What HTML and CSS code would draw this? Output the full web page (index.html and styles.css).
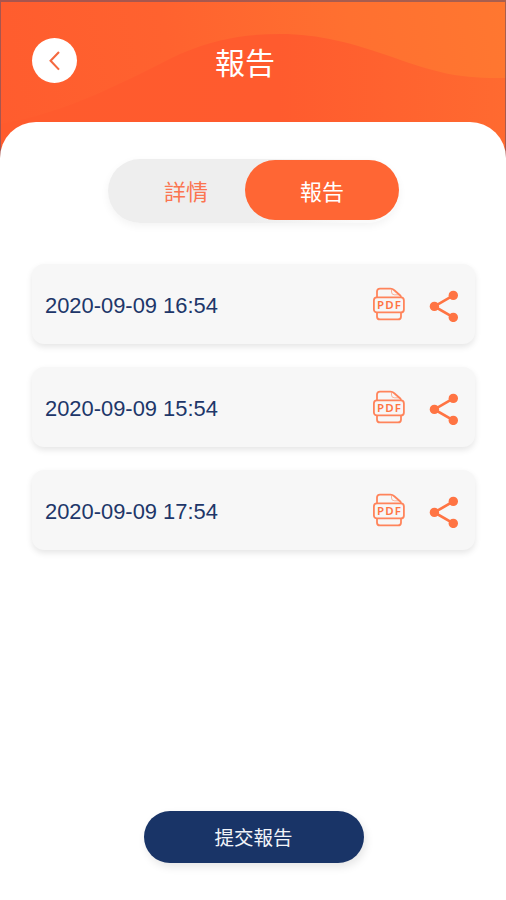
FILE: index.html
```html
<!DOCTYPE html>
<html lang="zh-Hant">
<head>
    <meta charset="UTF-8">
    <meta name="viewport" content="width=device-width, initial-scale=1.0">
    <title>報告</title>
    <link rel="stylesheet" href="styles.css">
</head>
<body>
    <header class="header">
        <svg class="wave" viewBox="0 0 506 160" preserveAspectRatio="none">
            <defs>
                <linearGradient id="wave-fill" x1="0" y1="0" x2="1" y2="0">
                    <stop offset="0" stop-color="#ff5b2d"/>
                    <stop offset="0.55" stop-color="#ff5b2e"/>
                    <stop offset="1" stop-color="#ff6a30"/>
                </linearGradient>
            </defs>
            <path d="M0 124C70 112 125 81 180 54C217 38 248 34 280 34C320 34 352 43 395 58C435 72 458 79 506 78V160H0Z" fill="url(#wave-fill)"/>
        </svg>
        <button class="back" aria-label="返回">
            <svg width="12" height="20" viewBox="0 0 12 20">
                <path d="M10 1L1.6 9.7L10 18.6" fill="none" stroke="#f4693f" stroke-width="2.1"/>
            </svg>
        </button>
        <h1 class="title">報告</h1>
    </header>

    <main class="panel">
        <div class="tabs">
            <span class="tab">詳情</span>
            <span class="tab active">報告</span>
        </div>

        <div class="list">
            <div class="card">
                <span class="date">2020-09-09 16:54</span>
                <svg class="pdf" viewBox="0 0 34 34">
                    <rect x="1.9" y="10.4" width="30" height="15" rx="3"/>
                    <path d="M5 10.4V4.6Q5 1.6 8 1.6H18.5Q20.5 1.6 22 3L28 8.2Q29 9.2 29 10.4"/>
                    <path class="fold" d="M19.5 2.5V5Q19.5 7.8 22.5 7.8H27"/>
                    <path d="M5 25.4V29.4Q5 32.4 8 32.4H26Q29 32.4 29 29.4V25.4"/>
                    <text x="5" y="22">PDF</text>
                </svg>
                <svg class="share" viewBox="0 0 30 32">
                    <path d="M24.4 5.4L5.4 16.4L24.4 27.4"/>
                    <circle cx="24.3" cy="5.4" r="4.7"/>
                    <circle cx="5.4" cy="16.4" r="4.7"/>
                    <circle cx="24.3" cy="27.4" r="4.7"/>
                </svg>
            </div>
            <div class="card">
                <span class="date">2020-09-09 15:54</span>
                <svg class="pdf" viewBox="0 0 34 34">
                    <rect x="1.9" y="10.4" width="30" height="15" rx="3"/>
                    <path d="M5 10.4V4.6Q5 1.6 8 1.6H18.5Q20.5 1.6 22 3L28 8.2Q29 9.2 29 10.4"/>
                    <path class="fold" d="M19.5 2.5V5Q19.5 7.8 22.5 7.8H27"/>
                    <path d="M5 25.4V29.4Q5 32.4 8 32.4H26Q29 32.4 29 29.4V25.4"/>
                    <text x="5" y="22">PDF</text>
                </svg>
                <svg class="share" viewBox="0 0 30 32">
                    <path d="M24.4 5.4L5.4 16.4L24.4 27.4"/>
                    <circle cx="24.3" cy="5.4" r="4.7"/>
                    <circle cx="5.4" cy="16.4" r="4.7"/>
                    <circle cx="24.3" cy="27.4" r="4.7"/>
                </svg>
            </div>
            <div class="card">
                <span class="date">2020-09-09 17:54</span>
                <svg class="pdf" viewBox="0 0 34 34">
                    <rect x="1.9" y="10.4" width="30" height="15" rx="3"/>
                    <path d="M5 10.4V4.6Q5 1.6 8 1.6H18.5Q20.5 1.6 22 3L28 8.2Q29 9.2 29 10.4"/>
                    <path class="fold" d="M19.5 2.5V5Q19.5 7.8 22.5 7.8H27"/>
                    <path d="M5 25.4V29.4Q5 32.4 8 32.4H26Q29 32.4 29 29.4V25.4"/>
                    <text x="5" y="22">PDF</text>
                </svg>
                <svg class="share" viewBox="0 0 30 32">
                    <path d="M24.4 5.4L5.4 16.4L24.4 27.4"/>
                    <circle cx="24.3" cy="5.4" r="4.7"/>
                    <circle cx="5.4" cy="16.4" r="4.7"/>
                    <circle cx="24.3" cy="27.4" r="4.7"/>
                </svg>
            </div>
        </div>

        <button class="submit">提交報告</button>
    </main>
</body>
</html>
```

FILE: styles.css
```css
* {
    box-sizing: border-box;
}

body {
    font-family: "Liberation Sans", "Noto Sans CJK TC", sans-serif;
    background-color: #fff;
    margin: 0;
    height: 900px;
    display: flex;
    flex-direction: column;
    overflow: hidden;
}

button {
    border: 0;
    padding: 0;
    font-family: inherit;
}

/* Header */
.header {
    position: relative;
    flex: none;
    height: 160px;
    padding: 38px 32px 0;
    display: grid;
    grid-template-columns: 45px 1fr 45px;
    align-items: start;
    background: linear-gradient(80deg, #ff5c2e 0%, #ff622f 35%, #ff7030 70%, #ff7730 100%);
}

/* Thin dark edge at the top and the sides */
.header::after {
    content: "";
    position: absolute;
    inset: 0;
    border: 1px solid rgba(110, 80, 100, 0.6);
    border-top-width: 2px;
    border-bottom: 0;
}

.wave {
    position: absolute;
    inset: 0;
    width: 100%;
    height: 100%;
}

.back {
    position: relative;
    width: 45px;
    height: 45px;
    border-radius: 50%;
    background-color: #fff;
    display: flex;
    align-items: center;
    justify-content: center;
}

.title {
    position: relative;
    margin: 4px 0 0;
    padding-right: 16px;
    text-align: center;
    font-size: 30px;
    font-weight: 400;
    line-height: 44px;
    color: #fff;
}

/* White sheet over the header */
.panel {
    position: relative;
    flex: 1;
    margin-top: -38px;
    padding: 37px 31px 37px 32px;
    border-radius: 36px 36px 0 0;
    background-color: #fff;
    display: flex;
    flex-direction: column;
    align-items: center;
}

.tabs {
    width: 291px;
    height: 64px;
    border-radius: 32px;
    background: linear-gradient(90deg, #eee 50%, #fafafa 85%);
    box-shadow: 0 3px 8px rgba(0, 0, 0, 0.05);
    display: flex;
    padding-top: 1px;
}

.tab {
    width: 137px;
    height: 60px;
    padding-left: 19px;
    text-align: center;
    font-size: 22px;
    line-height: 65px;
    color: #fb7550;
}

.tab.active {
    width: 154px;
    padding-left: 0;
    border-radius: 30px;
    background-color: #ff6634;
    color: #fff;
}

.list {
    width: 100%;
    margin-top: 41px;
    display: flex;
    flex-direction: column;
    gap: 23px;
}

.card {
    height: 80px;
    padding: 0 16px 0 13px;
    border-radius: 12px;
    background-color: #f7f7f7;
    box-shadow: 0 3px 6px rgba(0, 0, 0, 0.1);
    display: flex;
    align-items: center;
}

.date {
    flex: 1;
    font-size: 21.9px;
    line-height: 26px;
    padding-top: 4px;
    color: #203669;
}

.pdf {
    width: 34px;
    height: 34px;
    margin-right: 23px;
    fill: none;
    stroke: #ff845b;
    stroke-width: 1.8;
    stroke-linejoin: round;
}

.pdf .fold {
    stroke-width: 1;
    opacity: 0.6;
}

.pdf text {
    font-family: "Noto Sans", sans-serif;
    font-size: 11.5px;
    font-weight: 600;
    letter-spacing: 1.1px;
    fill: #ff7443;
    stroke: none;
}

.share {
    width: 30px;
    height: 32px;
    margin-top: 4px;
    fill: #ff7443;
}

.share path {
    fill: none;
    stroke: #ff7443;
    stroke-width: 2.7;
}

.submit {
    width: 220px;
    height: 52px;
    margin-top: auto;
    border-radius: 26px;
    background-color: #193467;
    box-shadow: 2px 4px 8px rgba(0, 0, 0, 0.1);
    font-size: 19.5px;
    line-height: 55px;
    color: #f1f3f8;
}
```
